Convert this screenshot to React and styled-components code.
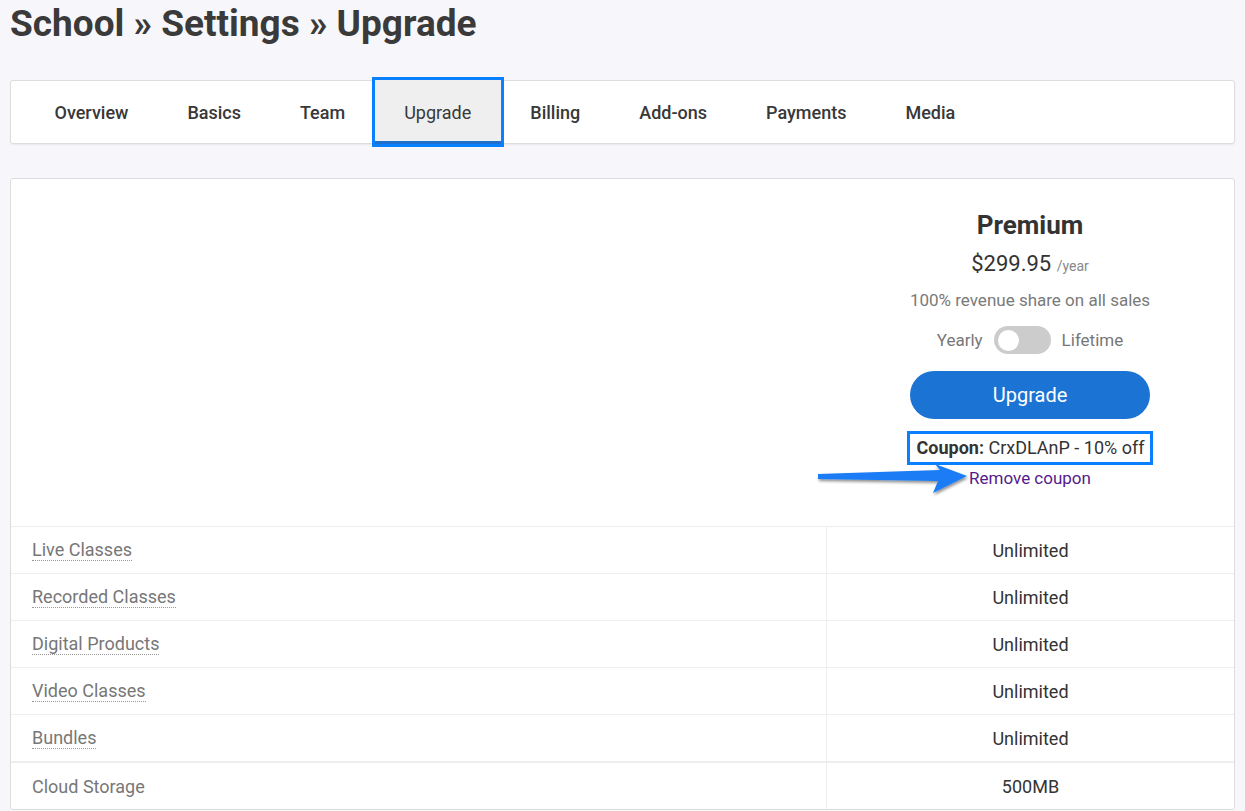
import React from "react";
import styled, { createGlobalStyle } from "styled-components";

const GlobalStyle = createGlobalStyle`
  body {
    margin: 0;
    background: #f7f7fb;
    font-family: Roboto, "Liberation Sans", sans-serif;
    color: #333;
  }
`;

const Page = styled.div`
  padding: 0 10px 0 10px;
`;

const Title = styled.h1`
  margin: 0;
  padding-top: 2px;
  height: 78px;
  font-size: 37px;
  font-weight: 700;
  color: #3a3a3a;
  line-height: 44px;
`;

const TabBar = styled.nav`
  display: flex;
  align-items: stretch;
  height: 62px;
  padding-left: 14px;
  background: #fff;
  border: 1px solid #ddd;
  border-radius: 3px;
  box-shadow: 0 1px 2px rgba(0, 0, 0, 0.06);
`;

const Tab = styled.a`
  display: flex;
  align-items: center;
  padding: 0 29.5px;
  margin: ${(p) => (p.$active ? "-1px 0" : "0")};
  font-size: 18px;
  font-weight: ${(p) => (p.$active ? 400 : 500)};
  color: #383838;
  text-decoration: none;
  background: ${(p) => (p.$active ? "#efefef" : "transparent")};
  box-shadow: ${(p) => (p.$active ? "inset 0 -3px 0 #1f6fcc" : "none")};
  outline: ${(p) => (p.$active ? "3px solid #0a80ff" : "none")};
`;

const Card = styled.section`
  position: relative;
  margin-top: 34px;
  background: #fff;
  border: 1px solid #ddd;
  border-radius: 3px;
`;

const Grid = styled.div`
  display: grid;
  grid-template-columns: 1fr 408px;
`;

const EmptyCell = styled.div``;

const PlanCell = styled.div`
  display: flex;
  flex-direction: column;
  align-items: center;
  padding: 30px 0 37px;
`;

const PlanName = styled.h2`
  margin: 0;
  font-size: 26px;
  font-weight: 700;
  color: #333;
  line-height: 32px;
`;

const Price = styled.div`
  margin-top: 8px;
  font-size: 22px;
  line-height: 30px;
  color: #333;

  small {
    font-size: 14px;
    color: #888;
  }
`;

const Note = styled.div`
  margin-top: 8px;
  font-size: 17px;
  line-height: 22px;
  color: #7a7a7a;
`;

const ToggleRow = styled.div`
  display: flex;
  align-items: center;
  gap: 11px;
  margin-top: 15px;
  font-size: 17px;
  color: #777;
`;

const Switch = styled.span`
  display: inline-flex;
  align-items: center;
  width: 57px;
  height: 28px;
  padding: 0 4px;
  box-sizing: border-box;
  border-radius: 14px;
  background: #cccccc;

  &::before {
    content: "";
    width: 21px;
    height: 21px;
    border-radius: 50%;
    background: #fff;
  }
`;

const UpgradeButton = styled.button`
  margin-top: 17px;
  width: 240px;
  height: 48px;
  border: none;
  border-radius: 24px;
  background: #1b74d3;
  color: #fff;
  font-family: inherit;
  font-size: 20px;
`;

const Coupon = styled.div`
  margin-top: 12px;
  padding: 3px 6px 3px 7px;
  border: 3px solid #0a80ff;
  font-size: 18px;
  line-height: 22px;
  color: #333;

  b {
    font-weight: 700;
  }
`;

const RemoveLink = styled.a`
  margin-top: 2px;
  font-size: 17px;
  line-height: 22px;
  color: #551a8b;
  text-decoration: none;
`;

const Arrow = styled.svg`
  position: absolute;
  left: 798px;
  top: 280px;
`;

const Label = styled.div`
  display: flex;
  align-items: center;
  height: 46px;
  padding-left: 21px;
  border-top: ${(p) => (p.$thick ? 2 : 1)}px solid #eee;
  font-size: 18px;
  color: #777;

  span {
    border-bottom: ${(p) => (p.$dotted ? "1px dotted #999" : "none")};
    line-height: 21px;
  }
`;

const Value = styled.div`
  display: flex;
  align-items: center;
  justify-content: center;
  height: 46px;
  border-top: ${(p) => (p.$thick ? 2 : 1)}px solid #eee;
  border-left: 1px solid #eee;
  font-size: 18px;
  color: #333;
`;

const tabs = ["Overview", "Basics", "Team", "Upgrade", "Billing", "Add-ons", "Payments", "Media"];

const features = [
  { name: "Live Classes", value: "Unlimited", dotted: true },
  { name: "Recorded Classes", value: "Unlimited", dotted: true },
  { name: "Digital Products", value: "Unlimited", dotted: true },
  { name: "Video Classes", value: "Unlimited", dotted: true },
  { name: "Bundles", value: "Unlimited", dotted: true },
  { name: "Cloud Storage", value: "500MB", thick: true },
];

export default function App() {
  return (
    <Page>
      <GlobalStyle />
      <Title>School » Settings » Upgrade</Title>
      <TabBar>
        {tabs.map((t) => (
          <Tab key={t} $active={t === "Upgrade"}>
            {t}
          </Tab>
        ))}
      </TabBar>
      <Card>
        <Grid>
          <EmptyCell />
          <PlanCell>
            <PlanName>Premium</PlanName>
            <Price>
              $299.95 <small>/year</small>
            </Price>
            <Note>100% revenue share on all sales</Note>
            <ToggleRow>
              Yearly <Switch /> Lifetime
            </ToggleRow>
            <UpgradeButton>Upgrade</UpgradeButton>
            <Coupon>
              <b>Coupon:</b> CrxDLAnP - 10% off
            </Coupon>
            <RemoveLink href="#">Remove coupon</RemoveLink>
          </PlanCell>
          {features.map((f) => (
            <React.Fragment key={f.name}>
              <Label $dotted={f.dotted} $thick={f.thick}>
                <span>{f.name}</span>
              </Label>
              <Value $thick={f.thick}>{f.value}</Value>
            </React.Fragment>
          ))}
        </Grid>
        <Arrow width="164" height="44" viewBox="0 0 164 44">
          <defs>
            <filter id="sh" x="-10%" y="-30%" width="130%" height="180%">
              <feDropShadow dx="1" dy="2" stdDeviation="1.5" floodColor="#000" floodOpacity="0.45" />
            </filter>
          </defs>
          <polygon
            points="9,15 131,11 126,5 158,17 124,34 129,22 9,20"
            fill="#1a7cf5"
            filter="url(#sh)"
          />
        </Arrow>
      </Card>
    </Page>
  );
}
